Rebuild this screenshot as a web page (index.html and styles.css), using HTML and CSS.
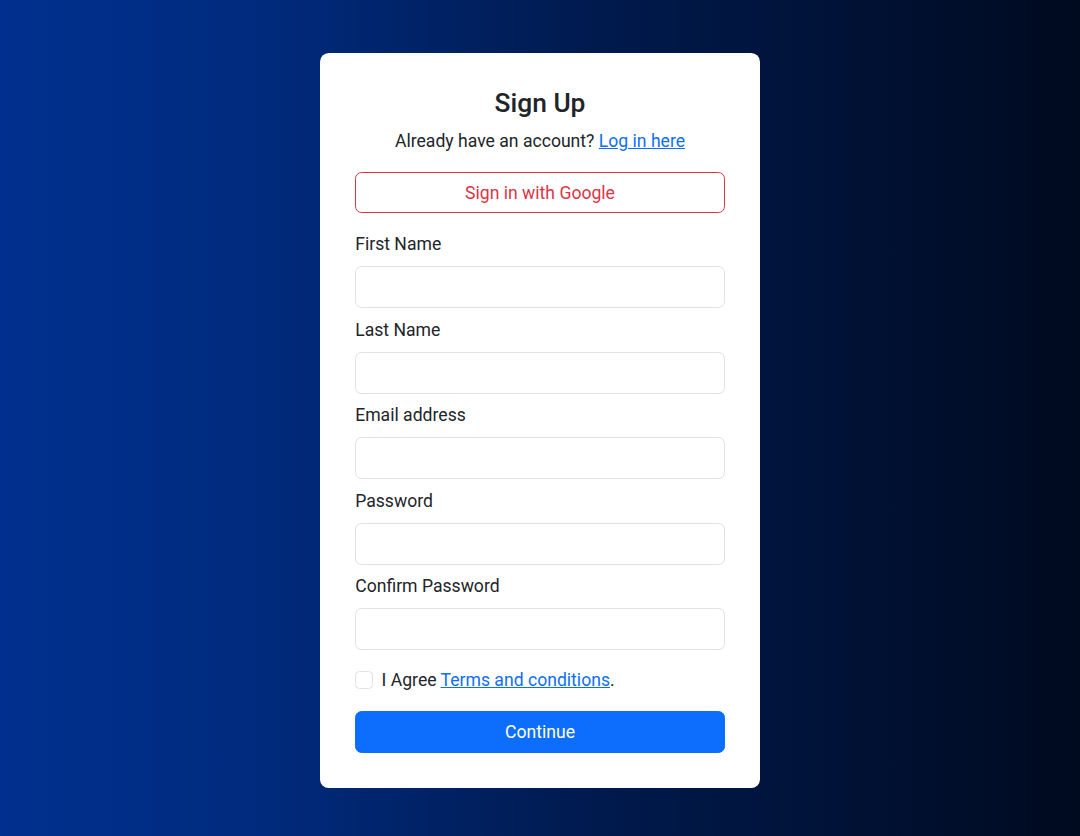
FILE: index.html
```html
<!DOCTYPE html>
<html lang="en">
<head>
<meta charset="utf-8">
<title>Sign Up</title>
<link rel="stylesheet" href="styles.css">
</head>
<body>
<main class="page">
  <form class="card">
    <h1 class="title">Sign Up</h1>
    <p class="sub">Already have an account? <a href="#" class="link">Log in here</a></p>
    <button type="button" class="btn-google">Sign in with Google</button>
    <div class="field">
      <label class="label">First Name</label>
      <input class="input" type="text">
    </div>
    <div class="field">
      <label class="label">Last Name</label>
      <input class="input" type="text">
    </div>
    <div class="field">
      <label class="label">Email address</label>
      <input class="input" type="email">
    </div>
    <div class="field">
      <label class="label">Password</label>
      <input class="input" type="password">
    </div>
    <div class="field">
      <label class="label">Confirm Password</label>
      <input class="input" type="password">
    </div>
    <div class="check-row">
      <span class="checkbox"></span>
      <span>I Agree <a href="#" class="link">Terms and conditions</a>.</span>
    </div>
    <button type="button" class="btn-primary">Continue</button>
  </form>
</main>
</body>
</html>
```

FILE: styles.css
```css
* { box-sizing: border-box; }
html, body { margin: 0; padding: 0; }
body {
  font-family: Roboto, "Liberation Sans", sans-serif;
  font-size: 17.6px;
  line-height: 1.5;
  color: #212529;
  background: linear-gradient(to right, #00308f 0%, #002a7c 25%, #001a4e 55%, #000a1f 100%);
  min-height: 836px;
}
.page {
  display: flex;
  justify-content: center;
  padding-top: 53px;
}
.card {
  width: 440px;
  background: #fff;
  border-radius: 8.8px;
  padding: 35.2px;
  display: flex;
  flex-direction: column;
}
.title {
  margin: 0 0 8px;
  font-family: "Roboto Medium", Roboto, "Liberation Sans", sans-serif;
  font-size: 26.4px;
  font-weight: 500;
  line-height: 1.2;
  text-align: center;
}
.sub {
  margin: 0 0 18px;
  text-align: center;
}
.link {
  color: #0d6efd;
  text-decoration: underline;
}
.btn-google {
  height: 41px;
  border: 1px solid #dc3545;
  border-radius: 6.6px;
  background: #fff;
  color: #dc3545;
  font: inherit;
  margin-bottom: 18px;
  padding: 0;
}
.field {
  display: flex;
  flex-direction: column;
  margin-bottom: 8.5px;
}
.label {
  margin-bottom: 8.8px;
}
.input {
  height: 41.8px;
  border: 1px solid #dee2e6;
  border-radius: 6.6px;
  background: #fff;
  font: inherit;
  padding: 6.6px 13.2px;
}
.check-row {
  display: flex;
  align-items: center;
  gap: 8.8px;
  margin-top: 8.2px;
  margin-bottom: 17.6px;
}
.checkbox {
  width: 17.6px;
  height: 17.6px;
  border: 1px solid #dee2e6;
  border-radius: 4.4px;
  background: #fff;
  flex: none;
}
.btn-primary {
  height: 41.8px;
  border: 1px solid #0d6efd;
  border-radius: 6.6px;
  background: #0d6efd;
  color: #fff;
  font: inherit;
  padding: 0;
}
```
